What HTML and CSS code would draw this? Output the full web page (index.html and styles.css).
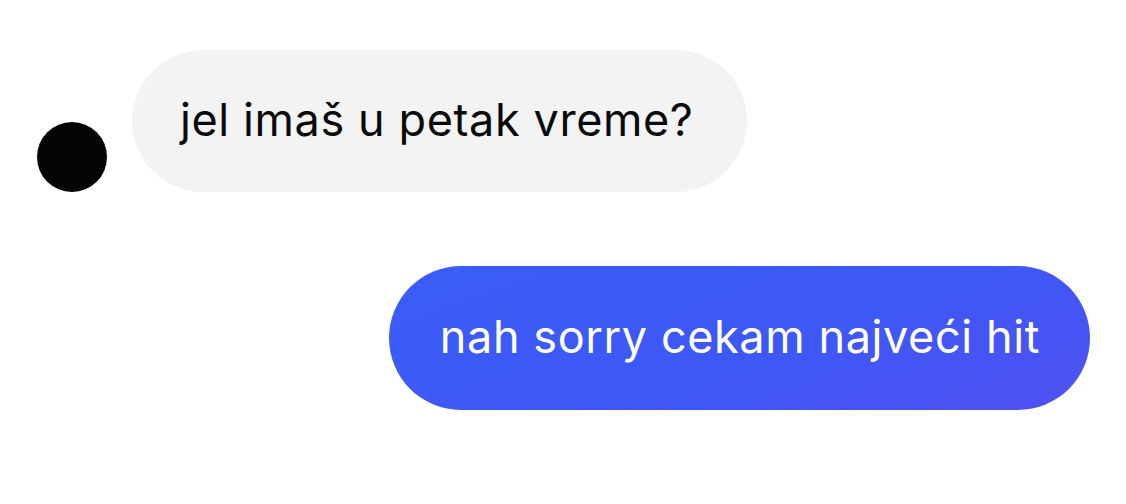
FILE: index.html
```html
<!DOCTYPE html>
<html lang="sr">
<head>
<meta charset="utf-8">
<link rel="stylesheet" href="styles.css">
</head>
<body>
<main class="chat">
  <div class="row row-in">
    <div class="avatar"></div>
    <div class="bubble bubble-in">jel imaš u petak vreme?</div>
  </div>
  <div class="row row-out">
    <div class="bubble bubble-out">nah sorry cekam najveći hit</div>
  </div>
</main>
</body>
</html>
```
FILE: styles.css
```css
html, body {
  margin: 0;
  padding: 0;
  background: #ffffff;
}
.chat {
  width: 1126px;
  height: 504px;
  box-sizing: border-box;
  padding: 50px 36px 0 37px;
  display: flex;
  flex-direction: column;
  gap: 74px;
  font-family: Inter, "Noto Sans", sans-serif;
}
.row {
  display: flex;
  align-items: flex-end;
}
.row-in {
  gap: 25px;
}
.row-out {
  justify-content: flex-end;
}
.avatar {
  width: 70px;
  height: 70px;
  border-radius: 50%;
  background: #050508;
  flex: none;
}
.bubble {
  display: flex;
  align-items: center;
  border-radius: 72px;
  font-size: 45px;
  letter-spacing: 0.6px;
  white-space: nowrap;
  box-sizing: border-box;
}
.bubble-in {
  height: 142px;
  padding: 0 54px 4px 48px;
  background: #f3f3f3;
  color: #0a0a0a;
}
.bubble-out {
  height: 144px;
  padding: 0 50px 4px 51px;
  background: linear-gradient(160deg, #3a5df7 0%, #3d58f6 55%, #5150f1 100%);
  color: #ffffff;
}
```
